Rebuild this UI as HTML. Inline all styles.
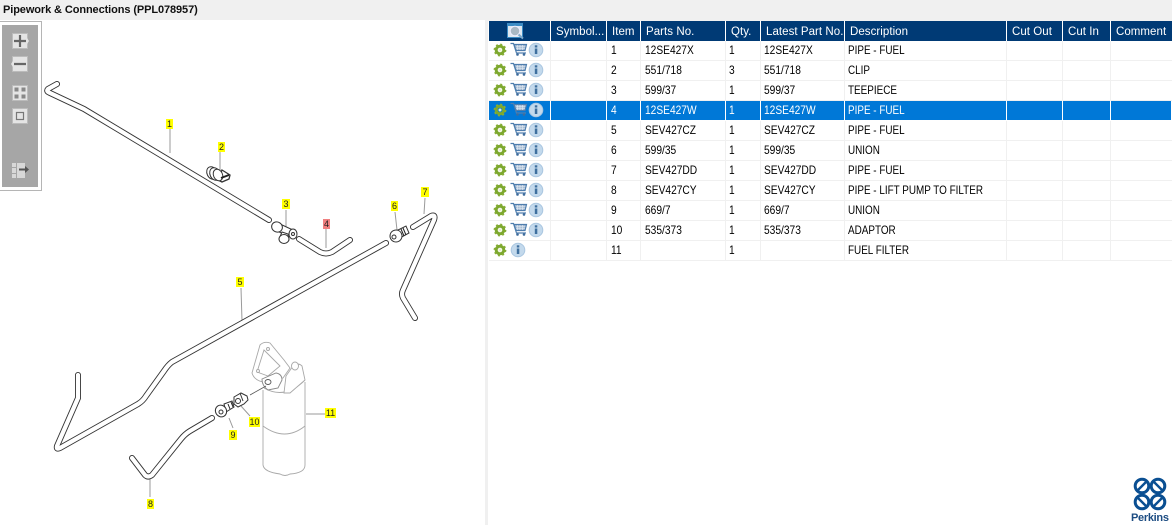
<!DOCTYPE html>
<html><head><meta charset="utf-8"><style>
html,body{margin:0;padding:0;background:#fff}
body{width:1172px;height:525px;overflow:hidden;position:relative;font-family:"Liberation Sans",sans-serif;font-size:12px;color:#000}
#bar{position:absolute;left:0;top:0;width:1172px;height:20px;background:#f0f0f0;font-weight:bold;line-height:20px;text-indent:3px;font-size:11px;letter-spacing:-.1px;color:#111}
#split{position:absolute;left:485px;top:20px;width:3px;height:505px;background:#f0f0f0}
#gridtop{position:absolute;left:488px;top:20px;width:684px;height:1px;background:#f0f0f0}
table{position:absolute;left:489px;top:21px;border-collapse:separate;border-spacing:0;table-layout:fixed;width:683px}
td,th{height:19px;padding:0 0 0 4px;box-sizing:content-box;border-right:1px solid #f0f0f0;border-bottom:1px solid #f0f0f0;font-weight:normal;text-align:left;white-space:nowrap;overflow:hidden;line-height:19px;font-size:12px}
td:nth-child(5),td:nth-child(6),td:nth-child(7){padding-left:3px}
td b{font-weight:normal;display:inline-block;transform:scaleX(.85);transform-origin:0 50%;position:relative;top:0}
td:nth-child(7) b{transform:scaleX(.825)}
th b{font-weight:normal;display:inline-block;position:relative;top:1px}
th{background:#003a75;color:#fff;border-right:1px solid #fff;border-bottom:0;height:20px;line-height:20px;padding-left:5px;letter-spacing:.05px;font-size:11.5px}
tr.s td{background:#0078d7;color:#fff;border-right:1px solid #fff;border-bottom:1px solid #fff}
td.i{padding:0;position:relative}
td.i svg,th svg{position:absolute;left:0;top:0}
th.i{padding:0;position:relative}
td:last-child,th:last-child{border-right:0}
.l{position:absolute;background:#ffff00;font-size:9px;line-height:10px;text-align:center;height:10px;color:#222}
#tb{position:absolute;left:0;top:21px;width:42px;height:170px;box-sizing:border-box;border:1px solid #b5b5b5;border-left:0;background:#fff}
#tbi{position:absolute;left:2px;top:3px;width:36px;height:162px;background:#a6a6a6}
</style></head><body>
<svg width="0" height="0" style="position:absolute"><defs>
<g id="gear"><g transform="translate(11,9)"><circle r="3.800" fill="none" stroke="#7da82e" stroke-width="3"/><circle r="5.600" fill="none" stroke="#86ad36" stroke-width="1.600" stroke-dasharray="2 2.400"/><circle r="1.500" fill="#e8f0d0"/></g></g>
<g id="inf"><circle cx="47" cy="9" r="6.800" fill="#c3d9ec" stroke="#a9c6e0"/><rect x="45.800" y="7.500" width="2.500" height="5.500" fill="#3e6f9e"/><rect x="45.800" y="4.300" width="2.500" height="2.200" fill="#3e6f9e"/></g>
<g id="ic">
<use href="#gear"/>
<g fill="none" stroke="#4f7eae" stroke-width="1.200"><path d="M21.500 2.500h3l3 9.500h9.500"/><path d="M25 3.500h12.500l-1.500 6h-9z" fill="#a9bdd3"/><path d="M27 5.500h9.500M27 7.500h9M28.500 4v5M31 4v5M33.500 4v5" stroke="#e4ecf4" stroke-width=".6"/></g>
<circle cx="28.500" cy="13.500" r="1.300" fill="#3e6c9c"/><circle cx="35" cy="13.500" r="1.300" fill="#3e6c9c"/>
<use href="#inf"/>
</g>
<g id="ic2"><use href="#gear"/><g transform="translate(-18 0)"><use href="#inf"/></g></g>
</defs></svg>
<div id="bar">Pipework &amp; Connections (PPL078957)</div>
<div id="split"></div><div id="gridtop"></div>

<svg style="position:absolute;left:0;top:0;filter:blur(.35px)" width="485" height="525" viewBox="0 0 485 525" fill="none">
<!-- leaders -->
<g stroke="#9a9a9a" stroke-width="1">
<path d="M170 129V153M220 152V170M286 210V230M326 229V248M241 288L242 321M395 212L397 230M425 198L424 214M150 478V497M229 418L233 428M241 406L250 416M306 414H326"/>
</g>
<!-- pipes -->
<g stroke-linejoin="round" stroke-linecap="round">
<g stroke="#333" stroke-width="6">
<path id="p1" d="M57 84L48 89Q46 91 49 92.500L84 109L269 220"/>
<path id="p4" d="M299 239L320 252Q326 255 332 252L350 240"/>
<path id="p5" d="M386 243L172 362Q168 365 164 371L146 396Q143 401 138 404L60 448Q56 450 57 446L78 398V375"/>
<path id="p7" d="M413 227L431 216Q436 214 434 220L403 290Q401 294 403 298L415 318"/>
<path id="p8" d="M212 418L190 431Q185 434 181 439L152 475Q148 478 145 475L132 458"/>
</g>
<g stroke="#fff" stroke-width="4.200">
<use href="#p1"/><use href="#p4"/><use href="#p5"/><use href="#p7"/><use href="#p8"/>
</g>
</g>
<!-- clip 2 -->
<g stroke="#333" stroke-width="1" fill="#fff">
<path d="M222 170l8 5-1 4-7 3-4-2z" stroke-width="1.300"/>
<ellipse cx="212" cy="173" rx="5" ry="6.500" transform="rotate(-25 212 173)"/>
<ellipse cx="215" cy="174" rx="5" ry="6.500" transform="rotate(-25 215 174)"/>
<ellipse cx="218" cy="175" rx="4.500" ry="6" transform="rotate(-25 218 175)"/>
<path d="M221 178l8-3" stroke-width="2" stroke="#222"/>
</g>
<!-- teepiece 3 -->
<g stroke="#333" stroke-width="1" fill="#fff">
<path d="M280 224l13 6-3 7-13-6z"/>
<ellipse cx="277" cy="227" rx="5.500" ry="5" transform="rotate(30 277 227)"/>
<ellipse cx="293" cy="234" rx="4" ry="5"/>
<path d="M282 232l6 2 1 6-6 2-4-3z"/>
<ellipse cx="284" cy="239" rx="5" ry="4.500"/>
<circle cx="293" cy="234" r="1.500"/>
</g>
<!-- fitting 6 -->
<g stroke="#333" stroke-width="1" fill="#fff">
<path d="M396 231l10-5 3 7-11 6z"/>
<ellipse cx="396" cy="236" rx="6" ry="6" transform="rotate(-30 396 236)"/>
<circle cx="394" cy="237" r="2"/>
<path d="M401 229l3 7M403 228l3 7" stroke="#222"/>
</g>
<!-- fittings 9 10 -->
<g stroke="#333" stroke-width="1" fill="#fff">
<path d="M224 404l8-3 2 6-8 5z"/>
<path d="M228 404l2 5M231 402l2 5" stroke="#222"/>
<ellipse cx="221" cy="411" rx="5.500" ry="6" transform="rotate(-30 221 411)"/>
<circle cx="221" cy="412" r="2"/>
<path d="M234 397l7-4 6 3 1 4-4 4-6 3-4-3z"/>
<path d="M240 393l3 8" />
<circle cx="238" cy="401" r="2.500"/>
</g>
<!-- filter 11 -->
<g stroke="#a8a8a8" stroke-width=".9" fill="#fff">
<path d="M263 390V465Q264 472 280 474Q285 477 290 474Q305 473 305 465V382"/>
<path d="M263 426Q285 442 305 426"/>
<path d="M264 388Q285 400 305 380"/>
<path d="M252 373L260 345Q264 341 270 343L284 360L290 368L283 378L263 382Q254 380 252 373z"/>
<path d="M257 372L264 350L280 366L268 376z"/>
<circle cx="268" cy="349" r="1.500"/><circle cx="258" cy="371" r="1.500"/>
<path d="M262 379L276 373Q282 374 282 380L278 388L268 390Q262 386 262 379z" stroke="#888"/>
<ellipse cx="268" cy="382" rx="3" ry="2.500" stroke="#555"/>
<path d="M286 376L293 366Q298 362 302 366L305 380L290 393H284z"/>
<ellipse cx="295" cy="366" rx="3.500" ry="4"/>
</g>
<path d="M250 395L266 386" stroke="#555" stroke-width=".8"/>
</svg>

<div class="l" style="left:166px;top:119px;width:7px">1</div>
<div class="l" style="left:218px;top:142px;width:7px">2</div>
<div class="l" style="left:282px;top:199px;width:8px">3</div>
<div class="l" style="left:323px;top:219px;width:7px;background:#f08080">4</div>
<div class="l" style="left:236px;top:277px;width:8px">5</div>
<div class="l" style="left:391px;top:201px;width:7px">6</div>
<div class="l" style="left:421px;top:187px;width:8px">7</div>
<div class="l" style="left:147px;top:499px;width:7px">8</div>
<div class="l" style="left:229px;top:430px;width:8px">9</div>
<div class="l" style="left:249px;top:417px;width:11px">10</div>
<div class="l" style="left:325px;top:408px;width:11px">11</div>

<div id="tb"><div id="tbi"></div></div>
<svg style="position:absolute;left:0;top:21px" width="42" height="170" fill="none">
<g fill="#e4e4e4" stroke="#bbb">
<rect x="12.500" y="12.500" width="15" height="15"/><path d="M27 17l2 3-2 3z" stroke="none"/>
<rect x="12.500" y="35.500" width="15" height="15"/><path d="M13 40l-2 3 2 3z" stroke="none"/>
<rect x="12.500" y="64.500" width="15" height="15"/>
<rect x="12.500" y="87.500" width="15" height="15"/>
</g>
<path d="M14 20h12M20 14v12M14 43h12" stroke="#666" stroke-width="2.200"/>
<g fill="#888"><rect x="14.500" y="66.500" width="4" height="4"/><rect x="21.500" y="66.500" width="4" height="4"/><rect x="14.500" y="73.500" width="4" height="4"/><rect x="21.500" y="73.500" width="4" height="4"/></g>
<rect x="16.500" y="91.500" width="7" height="7" stroke="#777" stroke-width="1.200"/>
<g fill="#d8d8d8"><rect x="12" y="142" width="4" height="4"/><rect x="12" y="147" width="4" height="5"/><rect x="12" y="153" width="4" height="4"/><rect x="17" y="142" width="8" height="15"/></g>
<path d="M19 148.500h7" stroke="#555" stroke-width="2"/><path d="M25 145l4 3.500-4 3.500z" fill="#555"/>
</svg>

<table>
<colgroup><col style="width:62px"><col style="width:56px"><col style="width:34px"><col style="width:85px"><col style="width:35px"><col style="width:84px"><col style="width:162px"><col style="width:56px"><col style="width:48px"><col style="width:61px"></colgroup>
<tr><th class="i"><svg width="61" height="20" fill="none"><rect x="18.500" y="2.500" width="15" height="14" fill="#dfe8f0" stroke="#3b8bc4"/><rect x="19" y="3" width="14" height="2" fill="#3b8bc4"/><circle cx="26" cy="10" r="4.800" fill="#a9b8c4" stroke="#eef"/><path d="M29.500 13.500l4.500 4" stroke="#7fa8c9" stroke-width="2"/></svg></th><th><b>Symbol...</b></th><th><b>Item</b></th><th><b>Parts No.</b></th><th><b>Qty.</b></th><th><b>Latest Part No.</b></th><th><b>Description</b></th><th><b>Cut Out</b></th><th><b>Cut In</b></th><th><b>Comment</b></th></tr>
<tr><td class="i"><svg width="61" height="19"><use href="#ic"/></svg></td><td></td><td><b>1</b></td><td><b>12SE427X</b></td><td><b>1</b></td><td><b>12SE427X</b></td><td><b>PIPE - FUEL</b></td><td></td><td></td><td></td></tr>
<tr><td class="i"><svg width="61" height="19"><use href="#ic"/></svg></td><td></td><td><b>2</b></td><td><b>551/718</b></td><td><b>3</b></td><td><b>551/718</b></td><td><b>CLIP</b></td><td></td><td></td><td></td></tr>
<tr><td class="i"><svg width="61" height="19"><use href="#ic"/></svg></td><td></td><td><b>3</b></td><td><b>599/37</b></td><td><b>1</b></td><td><b>599/37</b></td><td><b>TEEPIECE</b></td><td></td><td></td><td></td></tr>
<tr class="s"><td class="i"><svg width="61" height="19"><use href="#ic"/></svg></td><td></td><td><b>4</b></td><td><b>12SE427W</b></td><td><b>1</b></td><td><b>12SE427W</b></td><td><b>PIPE - FUEL</b></td><td></td><td></td><td></td></tr>
<tr><td class="i"><svg width="61" height="19"><use href="#ic"/></svg></td><td></td><td><b>5</b></td><td><b>SEV427CZ</b></td><td><b>1</b></td><td><b>SEV427CZ</b></td><td><b>PIPE - FUEL</b></td><td></td><td></td><td></td></tr>
<tr><td class="i"><svg width="61" height="19"><use href="#ic"/></svg></td><td></td><td><b>6</b></td><td><b>599/35</b></td><td><b>1</b></td><td><b>599/35</b></td><td><b>UNION</b></td><td></td><td></td><td></td></tr>
<tr><td class="i"><svg width="61" height="19"><use href="#ic"/></svg></td><td></td><td><b>7</b></td><td><b>SEV427DD</b></td><td><b>1</b></td><td><b>SEV427DD</b></td><td><b>PIPE - FUEL</b></td><td></td><td></td><td></td></tr>
<tr><td class="i"><svg width="61" height="19"><use href="#ic"/></svg></td><td></td><td><b>8</b></td><td><b>SEV427CY</b></td><td><b>1</b></td><td><b>SEV427CY</b></td><td><b>PIPE - LIFT PUMP TO FILTER</b></td><td></td><td></td><td></td></tr>
<tr><td class="i"><svg width="61" height="19"><use href="#ic"/></svg></td><td></td><td><b>9</b></td><td><b>669/7</b></td><td><b>1</b></td><td><b>669/7</b></td><td><b>UNION</b></td><td></td><td></td><td></td></tr>
<tr><td class="i"><svg width="61" height="19"><use href="#ic"/></svg></td><td></td><td><b>10</b></td><td><b>535/373</b></td><td><b>1</b></td><td><b>535/373</b></td><td><b>ADAPTOR</b></td><td></td><td></td><td></td></tr>
<tr><td class="i"><svg width="61" height="19"><use href="#ic2"/></svg></td><td></td><td><b>11</b></td><td></td><td><b>1</b></td><td></td><td><b>FUEL FILTER</b></td><td></td><td></td><td></td></tr>
</table>

<svg style="position:absolute;left:1130px;top:475px" width="40" height="38" fill="none" stroke="#0a4f92" stroke-width="3">
<circle cx="12" cy="11" r="6.800"/><circle cx="28" cy="11" r="6.800"/><circle cx="12" cy="27" r="6.800"/><circle cx="28" cy="27" r="6.800"/>
<path d="M7 16L17 6M23 6L33 16M7 22L17 32M23 32L33 22" stroke-width="2.400"/>
</svg>
<div style="position:absolute;left:1131px;top:512px;font-size:11px;font-weight:bold;color:#1c4c82;line-height:12px;letter-spacing:-.3px">Perkins</div>
</body></html>
